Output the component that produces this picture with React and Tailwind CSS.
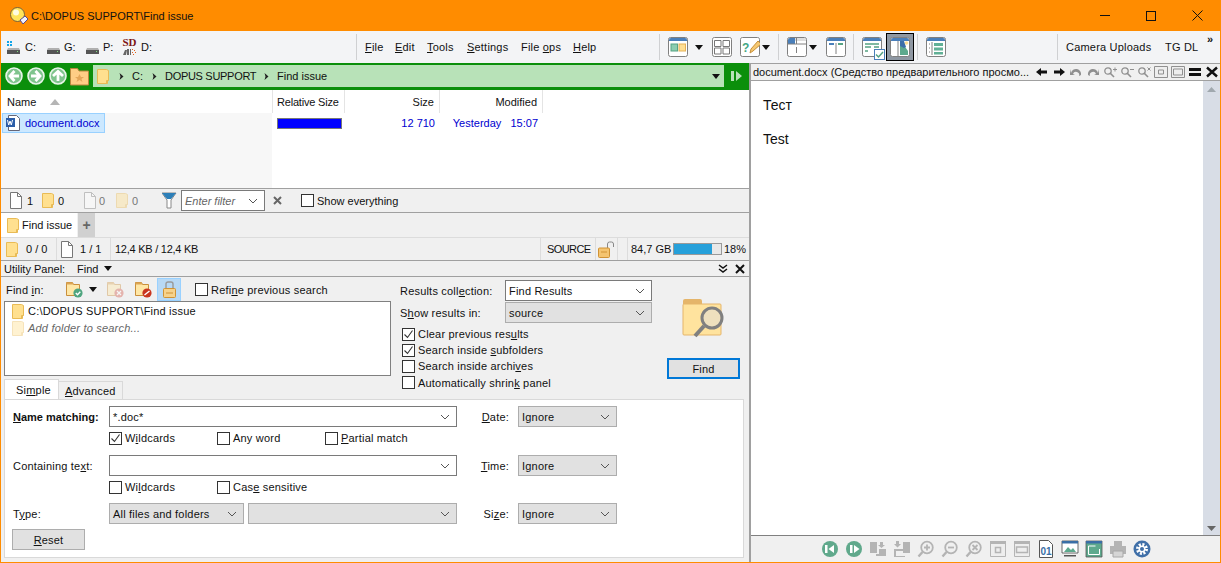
import React from "react";

const FONT = "font-['Liberation_Sans',Arial,sans-serif]";

function Folder({ size = 14, faded = false }) {
  return (
    <svg width={size} height={size * 1.25} viewBox="0 0 12 15" className={`shrink-0 ${faded ? "opacity-40" : ""}`}>
      <path d="M.5.5h9l2 1v10h-1v3H.5z" fill="#ffe08f" stroke="#e9bb55" />
      <path d="M9.5 14.5v-3h2" fill="none" stroke="#e9bb55" />
    </svg>
  );
}

function Page({ faded = false }) {
  return (
    <svg width="14" height="17" viewBox="0 0 14 17" className={`shrink-0 ${faded ? "opacity-40" : ""}`}>
      <path d="M1.5.5h7l4 4v12h-11z" fill="#fff" stroke="#777" />
      <path d="M8.5.5v4h4" fill="none" stroke="#777" />
    </svg>
  );
}

function Drive({ win }) {
  return (
    <svg width="15" height="15" viewBox="0 0 15 15" className="shrink-0">
      {win && <path d="M1 1h2v2H1zM4 1h2v2H4zM1 4h2v2H1zM4 4h2v2H4z" fill="#12a5e8" />}
      <path d="M2 8h11l1 2H1z" fill="#b0b0b0" />
      <rect x="1" y="10" width="13" height="4" fill="#555" />
      <rect x="11" y="11" width="1" height="1" fill="#7fe07f" />
    </svg>
  );
}

function Arrow({ className = "" }) {
  return (
    <svg width="8" height="5" viewBox="0 0 8 5" className={`shrink-0 ${className}`}>
      <path d="M0 0h8L4 5z" fill="#111" />
    </svg>
  );
}

function Chevron({ className = "" }) {
  return (
    <svg width="10" height="6" viewBox="0 0 10 6" className={`shrink-0 ${className}`}>
      <path d="M1 1l4 4 4-4" fill="none" stroke="#555" />
    </svg>
  );
}

function Frame({ children, top = "#4a7fba" }) {
  return (
    <svg width="20" height="20" viewBox="0 0 20 20" className="shrink-0">
      <rect x=".5" y=".5" width="19" height="19" rx="2" fill="#fff" stroke="#808080" />
      <path d="M1 3a2 2 0 0 1 2-2h14a2 2 0 0 1 2 2v1H1z" fill={top} />
      {children}
    </svg>
  );
}

function Divider({ className = "" }) {
  return <div className={`w-px h-[26px] bg-[#cfd0d2] shrink-0 ${className}`} />;
}

function NavCircle({ dir }) {
  const d = {
    left: "M9.500 4L5 9l4.500 5M5.500 9H14",
    right: "M8.500 4L13 9l-4.500 5M12.500 9H4",
    up: "M4 9l5-4.500L14 9M9 5v9",
  }[dir];
  return (
    <svg width="18" height="18" viewBox="0 0 18 18" className="shrink-0">
      <circle cx="9" cy="9" r="8" fill="#7fc48d" stroke="#e8f5e9" strokeWidth="1.6" />
      <path d={d} fill="none" stroke="#fff" strokeWidth="2.800" />
    </svg>
  );
}

function PathSep() {
  return (
    <svg width="5" height="7" viewBox="0 0 5 7" className="shrink-0">
      <path d="M.5 0l4 3.5-4 3.5 1-3.5z" fill="#222" />
    </svg>
  );
}

function Check({ checked, label, className = "" }) {
  return (
    <div className={`flex items-center gap-[3px] ${className}`}>
      <div className="w-[13px] h-[13px] border border-[#333] bg-white shrink-0 flex items-center justify-center">
        {checked && (
          <svg width="11" height="11" viewBox="0 0 11 11">
            <path d="M1.5 5.5l3 3 5-7" fill="none" stroke="#333" strokeWidth="1.1" />
          </svg>
        )}
      </div>
      <span className="whitespace-nowrap">{label}</span>
    </div>
  );
}

function Combo({ value, width, gray, italic, height = "h-[21px]", children }) {
  const look = gray ? "bg-[#e1e1e1] border-[#adadad]" : "bg-white border-[#7a7a7a]";
  return (
    <div className={`${height} border ${look} flex items-center shrink-0 pl-[3px] pr-[6px]`} style={{ width }}>
      <span className={`flex-1 whitespace-nowrap ${italic ? "italic text-[#666]" : ""}`}>{value}{children}</span>
      <Chevron />
    </div>
  );
}

function FolderAction({ badge, faded }) {
  return (
    <svg width="17" height="17" viewBox="0 0 17 17" className={`shrink-0 ${faded ? "opacity-40" : ""}`}>
      <path d="M.5 1.5h6l1 2h6v11H.5z" fill="#ffe7a6" stroke="#c98f3c" />
      <path d="M.5 1.5h6l1 2H.5z" fill="#dca554" />
      <circle cx="12" cy="12" r="4.6" fill={badge} />
      {badge === "#4fa57f" && <path d="M9.8 12l1.7 1.7 2.8-3" fill="none" stroke="#fff" strokeWidth="1.4" />}
      {badge === "#d45a4a" && <path d="M10 10l4 4m0-4l-4 4" fill="none" stroke="#fff" strokeWidth="1.3" />}
      {badge === "#c9351f" && <path d="M9.5 14l5-4" fill="none" stroke="#fff" strokeWidth="1.5" />}
    </svg>
  );
}

function Lock({ open }) {
  return (
    <svg width={open ? 16 : 13} height="17" viewBox={open ? "0 0 16 17" : "0 0 13 17"} className="shrink-0">
      {open ? (
        <>
          <path d="M9.5 7V3a2 2 0 0 1 2-2h2a2 2 0 0 1 2 2v3" fill="none" stroke="#888" />
          <rect x=".5" y="7" width="11" height="9.5" rx="1" fill="#f5c46f" stroke="#d09234" />
          <path d="M3 11h6" stroke="#d09234" />
        </>
      ) : (
        <>
          <path d="M3 8V3a2 2 0 0 1 2-2h3a2 2 0 0 1 2 2v5" fill="none" stroke="#999" strokeWidth="1.4" />
          <rect x=".5" y="7.5" width="12" height="9" rx="1" fill="#f7d28a" stroke="#d09234" />
          <path d="M3 12h7" stroke="#d09234" />
        </>
      )}
    </svg>
  );
}

function HeadGlyph({ children }) {
  return (
    <div className="w-[17px] flex justify-center items-center shrink-0">
      <svg width="14" height="12" viewBox="0 0 14 12">{children}</svg>
    </div>
  );
}

function Lens({ mark }) {
  return (
    <>
      <circle cx="5" cy="5" r="3.2" fill="none" stroke="#909090" strokeWidth="1.3" />
      <path d="M7.5 7.5l3.5 3.5" stroke="#909090" strokeWidth="1.6" />
      <path d={mark} stroke="#909090" fill="none" />
    </>
  );
}

function FootIcon({ children }) {
  return (
    <div className="w-[24px] flex justify-center items-center shrink-0">
      <svg width="18" height="18" viewBox="0 0 18 18">{children}</svg>
    </div>
  );
}

function FootLens({ mark }) {
  return (
    <>
      <circle cx="10" cy="7.5" r="5.8" fill="none" stroke="#b4b4b4" strokeWidth="1.8" />
      <path d="M5.5 12l-4 4.5" stroke="#b4b4b4" strokeWidth="2.4" />
      <path d={mark} stroke="#b4b4b4" strokeWidth="1.8" fill="none" />
    </>
  );
}

function TopBar() {
  return (
    <div className="h-[31px] bg-[#ff8c00] flex items-center shrink-0">
      <svg width="20" height="20" viewBox="0 0 20 20" className="ml-[8px] shrink-0">
        <circle cx="8.5" cy="8.5" r="7" fill="#ffe45c" stroke="#77613a" />
        <circle cx="7" cy="6.5" r="3" fill="#fffbe0" />
        <path d="M11 14l5-4 3 3-5 5z" fill="#f2f2ff" stroke="#5a4a8a" />
      </svg>
      <span className="ml-[2px] whitespace-nowrap">C:\DOPUS SUPPORT\Find issue</span>
      <div className="ml-auto flex items-center">
        <div className="w-[46px] h-[30px] flex items-center justify-center">
          <div className="w-[10px] h-px bg-[#111]" />
        </div>
        <div className="w-[46px] h-[30px] flex items-center justify-center">
          <div className="w-[10px] h-[10px] border border-[#111]" />
        </div>
        <div className="w-[46px] h-[30px] flex items-center justify-center">
          <svg width="11" height="11" viewBox="0 0 11 11"><path d="M.5.5l10 10m0-10l-10 10" stroke="#111" /></svg>
        </div>
      </div>
    </div>
  );
}

function ToolBar() {
  return (
    <div className="h-[32px] bg-[#f3f4f6] flex items-center shrink-0 relative">
      <div className="flex items-center w-[355px] pl-[5px]">
        <Drive win /><span className="ml-[4px] w-[21px]">C:</span>
        <Drive /><span className="ml-[3px] w-[21px]">G:</span>
        <Drive /><span className="ml-[3px] w-[19px]">P:</span>
        <div className="w-[15px] h-[20px] flex flex-col items-center shrink-0">
          <span className="text-[11px] leading-[10px] font-bold text-[#7d1414] font-['Liberation_Serif',serif]">SD</span>
          <svg width="15" height="9" viewBox="0 0 15 9">
            <path d="M1 8l2-5h2l-1 5zM5 2h2v6H5zM8 2h1v6H8z" fill="#666" />
            <path d="M10 2h1v1h-1zM12 3h1v1h-1zM10 5h1v1h-1zM13 5h1v1h-1zM11 7h1v1h-1z" fill="#e2611c" />
          </svg>
        </div>
        <span className="ml-[4px]">D:</span>
      </div>
      <Divider />
      <div className="flex items-center w-[302px] pl-[8px] tracking-[0.2px]">
        <span className="w-[30px]"><u>F</u>ile</span>
        <span className="w-[32px]"><u>E</u>dit</span>
        <span className="w-[40px]"><u>T</u>ools</span>
        <span className="w-[54px]"><u>S</u>ettings</span>
        <span className="w-[52px]">File <u>o</u>ps</span>
        <span><u>H</u>elp</span>
      </div>
      <Divider />
      <div className="flex items-center pl-[8px]">
        <Frame>
          <rect x="3" y="7" width="6.5" height="7" fill="#8ccdb0" stroke="#55a283" />
          <rect x="11" y="7" width="6.5" height="7" fill="#ffdf94" stroke="#e5b256" />
        </Frame>
        <Arrow className="ml-[7px]" />
        <div className="ml-[9px]">
          <Frame top="#fff">
            <path d="M2.5 3.5h6.5v6H2.5zM11 3.5h6.5v6H11zM2.5 11h6.5v6H2.5zM11 11h6.5v6H11z" fill="none" stroke="#777" />
          </Frame>
        </div>
        <div className="ml-[8px]">
          <Frame top="#fff">
            <text x="2" y="15" fontSize="12" fontWeight="700" fill="#45a683" fontFamily="Liberation Sans">?</text>
            <path d="M10 16l1-4 7-8 3 3-8 7z" fill="#f5c872" stroke="#c99038" />
          </Frame>
        </div>
        <Arrow className="ml-[2px]" />
      </div>
      <Divider className="ml-[8px]" />
      <div className="flex items-center pl-[8px]">
        <Frame top="#dedede">
          <path d="M1 3a2 2 0 0 1 2-2h5v6H1z" fill="#4a7fba" />
          <path d="M1 7h18M9.500 1v6M9.500 10v6" stroke="#808080" fill="none" />
        </Frame>
        <Arrow className="ml-[2px]" />
        <div className="ml-[9px]">
          <Frame>
            <path d="M10 6v11" stroke="#808080" />
            <rect x="3" y="6" width="5" height="2" fill="#4a7fba" />
            <rect x="12" y="6" width="5" height="2" fill="#55a283" />
          </Frame>
        </div>
      </div>
      <Divider className="ml-[7px]" />
      <div className="flex items-center pl-[8px]">
        <div className="relative w-[20px] h-[20px]">
          <Frame>
            <path d="M3 7h14M3 10h6M12 10h5M3 14h3" stroke="#55a283" strokeWidth="1.4" />
          </Frame>
          <div className="absolute right-[-3px] bottom-[-3px] w-[11px] h-[11px] bg-white border border-[#4a7fba] flex items-center justify-center">
            <svg width="9" height="9" viewBox="0 0 9 9"><path d="M1 4.500l2.500 2.500L8 2" fill="none" stroke="#55a283" strokeWidth="1.5" /></svg>
          </div>
        </div>
        <div className="ml-[4px] w-[28px] h-[28px] bg-[#8e97a2] border border-black flex items-center justify-center">
          <Frame>
            <path d="M8 4v15" stroke="#808080" />
            <path d="M10 4h8v14h-8z" fill="#fff" />
            <path d="M10 9l3-2 5 7v4h-8z" fill="#5da98d" />
            <path d="M10 4h4l2 6-2 1-4-2z" fill="#3e6fa8" />
            <circle cx="16.500" cy="6" r="1.800" fill="#ffdf94" />
          </Frame>
        </div>
      </div>
      <Divider className="ml-[3px]" />
      <div className="flex items-center pl-[8px] w-[139px]">
        <Frame>
          <path d="M6 5v13" stroke="#808080" />
          <path d="M3 7h1M3 11h1M3 15h1" stroke="#808080" />
          <path d="M8 6h9v3H8zM8 10.500h9v3H8zM8 15h9v2.500H8z" fill="#61b096" />
        </Frame>
      </div>
      <Divider />
      <div className="flex items-center pl-[8px] flex-1 tracking-[0.2px]">
        <span className="w-[99px] whitespace-nowrap">Camera Uploads</span>
        <span>TG DL</span>
      </div>
      <span className="absolute right-[7px] top-[2px] text-[11px] font-bold leading-[12px]">»</span>
    </div>
  );
}

function PathBar() {
  return (
    <div className="h-[26px] bg-[#0b8f0b] flex items-center shrink-0 pl-[4px]">
      <NavCircle dir="left" />
      <div className="ml-[4px]"><NavCircle dir="right" /></div>
      <div className="ml-[4px]"><NavCircle dir="up" /></div>
      <svg width="19" height="19" viewBox="0 0 19 19" className="ml-[3px] shrink-0">
        <path d="M.5 1.500h7l1.500 2.500h9.500v14H.5z" fill="#ffcd85" stroke="#b9873f" />
        <path d="M9.500 7l1.500 3h3l-2.500 2 1 3-3-2-3 2 1-3L5 10h3z" fill="#e5a75a" />
      </svg>
      <div className="ml-[4px] flex-1 h-[22px] bg-[#b8e2b8] flex items-center pl-[4px]">
        <Folder size={12} />
        <div className="ml-[10px]"><PathSep /></div>
        <span className="ml-[8px] w-[20px]">C:</span>
        <PathSep />
        <span className="ml-[8px] w-[91px] whitespace-nowrap tracking-[-0.3px]">DOPUS SUPPORT</span>
        <div className="ml-[8px]"><PathSep /></div>
        <span className="ml-[8px] whitespace-nowrap">Find issue</span>
        <Arrow className="ml-auto mr-[4px]" />
      </div>
      <div className="w-[25px] flex items-center justify-center shrink-0">
        <svg width="11" height="10" viewBox="0 0 11 10"><path d="M0 0h3v10H0zM5 0l6 5-6 5z" fill="#b8e2b8" /></svg>
      </div>
    </div>
  );
}

function Lister() {
  return (
    <div className="h-[99px] bg-white flex shrink-0 border-t border-[#0b8f0b]">
      <div className="w-[271px] shrink-0 flex flex-col">
        <div className="h-[23px] flex items-center pl-[6px] bg-white">
          <span>Name</span>
          <svg width="10" height="6" viewBox="0 0 10 6" className="ml-[14px]"><path d="M5 0l5 6H0z" fill="#b5b5b5" /></svg>
        </div>
        <div className="flex-1 bg-[#f7f7f7] pl-px">
          <div className="w-[103px] h-[20px] bg-[#cce8ff] border border-[#99d1ff] flex items-center pl-[2px] text-[#0000d0]">
            <svg width="16" height="16" viewBox="0 0 16 16" className="shrink-0">
              <path d="M3.500.5h8l3 3v12h-11z" fill="#fff" stroke="#667" />
              <rect x="1" y="3" width="9" height="9" fill="#2b5da8" />
              <path d="M2.500 5l1.200 5 1.300-4 1.300 4L7.500 5" fill="none" stroke="#fff" />
            </svg>
            <span className="ml-[4px] whitespace-nowrap">document.docx</span>
          </div>
        </div>
      </div>
      <div className="flex-1 flex flex-col">
        <div className="h-[23px] flex items-center">
          <div className="w-[73px] h-full border-l border-r border-[#e4e4e4] pl-[4px] flex items-center whitespace-nowrap tracking-[-0.2px]">Relative Size</div>
          <div className="w-[95px] h-full border-r border-[#e4e4e4] pr-[5px] flex items-center justify-end">Size</div>
          <div className="w-[103px] h-full border-r border-[#e4e4e4] pr-[5px] flex items-center justify-end">Modified</div>
        </div>
        <div className="h-[20px] flex items-center text-[#0000d0]">
          <div className="w-[73px] pl-[5px]">
            <div className="w-[65px] h-[11px] bg-[#0000ff] border border-[#777]" />
          </div>
          <div className="w-[95px] text-right pr-[5px]">12 710</div>
          <div className="w-[103px] text-right pr-[5px] whitespace-nowrap">Yesterday&nbsp;&nbsp;&nbsp;15:07</div>
        </div>
      </div>
    </div>
  );
}

function FilterBar() {
  return (
    <div className="h-[24px] border-t border-[#a0a0a0] flex items-center shrink-0 pl-[8px]">
      <Page />
      <span className="ml-[4px] w-[15px]">1</span>
      <Folder size={12} />
      <span className="ml-[4px] w-[25px]">0</span>
      <Page faded />
      <span className="ml-[2px] w-[17px] text-[#777]">0</span>
      <Folder size={12} faded />
      <span className="ml-[4px] w-[30px] text-[#777]">0</span>
      <svg width="15" height="17" viewBox="0 0 15 17" className="shrink-0">
        <path d="M0 1h14L9 8v8H5V8z" fill="#fff" stroke="#888" />
        <path d="M0 1h14L9 7H5z" fill="#2d7fb8" />
      </svg>
      <div className="ml-[4px]"><Combo value="Enter filter" width="84px" italic /></div>
      <svg width="9" height="9" viewBox="0 0 9 9" className="ml-[8px] shrink-0"><path d="M1 1l7 7m0-7L1 8" stroke="#666" strokeWidth="2" /></svg>
      <Check label="Show everything" className="ml-[19px]" />
    </div>
  );
}

function TabStrip() {
  return (
    <div className="h-[25px] border-t border-[#a0a0a0] flex shrink-0">
      <div className="w-[76px] bg-white flex items-center pl-[6px]">
        <Folder size={12} />
        <span className="ml-[3px] whitespace-nowrap">Find issue</span>
      </div>
      <div className="w-[17px] ml-px bg-[#d0d0d0] flex items-center justify-center font-bold text-[#666] text-[14px]">+</div>
    </div>
  );
}

function StatusBar() {
  return (
    <div className="h-[23px] border-t border-[#dcdcdc] flex items-center shrink-0 pl-[5px]">
      <Folder size={12} />
      <span className="ml-[8px] w-[30px] whitespace-nowrap">0 / 0</span>
      <div className="w-px h-full bg-[#dcdcdc]" />
      <div className="ml-[3px]"><Page /></div>
      <span className="ml-[6px] w-[30px] whitespace-nowrap">1 / 1</span>
      <div className="w-px h-full bg-[#dcdcdc]" />
      <span className="ml-[4px] w-[425px] whitespace-nowrap tracking-[-0.25px]">12,4 KB / 12,4 KB</span>
      <div className="w-px h-full bg-[#dcdcdc]" />
      <span className="ml-[6px] w-[48px] tracking-[-0.6px]">SOURCE</span>
      <div className="w-px h-full bg-[#dcdcdc]" />
      <div className="ml-[2px] w-[19px] flex"><Lock open /></div>
      <div className="w-px h-full bg-[#dcdcdc]" />
      <div className="ml-[9px] w-px h-full bg-[#dcdcdc]" />
      <span className="ml-[3px] whitespace-nowrap w-[42px]">84,7 GB</span>
      <div className="w-[49px] h-[12px] border border-[#999] bg-[#e8e8e8] shrink-0">
        <div className="h-full bg-[#26a0da]" style={{ width: "80%" }} />
      </div>
      <span className="ml-[2px]">18%</span>
    </div>
  );
}

function FindPanel() {
  return (
    <div className="flex-1 min-h-0 flex flex-col pl-[3px] pr-[5px] border-t border-[#a0a0a0] tracking-[0.2px]">
      <div className="flex h-[102px] shrink-0">
        <div className="w-[387px] shrink-0 flex flex-col">
          <div className="h-[24px] flex items-center pl-[2px] pt-px shrink-0">
            <span className="w-[60px]">Find <u>i</u>n:</span>
            <FolderAction badge="#4fa57f" />
            <Arrow className="ml-[6px]" />
            <div className="ml-[10px]"><FolderAction badge="#d45a4a" faded /></div>
            <div className="ml-[11px]"><FolderAction badge="#c9351f" /></div>
            <div className="ml-[5px] w-[24px] h-[23px] bg-[#b8d9f5] border border-[#99d1ff] flex items-center justify-center"><Lock /></div>
            <Check label={<>Refi<u>n</u>e previous search</>} className="ml-[14px]" />
          </div>
          <div className="h-[75px] bg-white border border-[#808080] pl-[7px] pt-[1px] flex flex-col gap-px shrink-0">
            <div className="flex items-center gap-[4px] h-[16px]">
              <Folder size={12} />
              <span className="whitespace-nowrap">C:\DOPUS SUPPORT\Find issue</span>
            </div>
            <div className="flex items-center gap-[4px] h-[16px]">
              <Folder size={12} faded />
              <span className="italic text-[#666] whitespace-nowrap">Add folder to search...</span>
            </div>
          </div>
        </div>
        <div className="w-[252px] ml-[9px] pt-[3px] flex flex-col shrink-0">
          <div className="flex items-center justify-between h-[22px]">
            <span className="whitespace-nowrap">Results coll<u>e</u>ction:</span>
            <Combo value="Find Results" width="147px" />
          </div>
          <div className="flex items-center justify-between h-[22px] mt-[1px]">
            <span className="whitespace-nowrap">S<u>h</u>ow results in:</span>
            <Combo value="source" width="147px" gray />
          </div>
          <div className="mt-[3px] pl-[2px] flex flex-col">
            <Check checked label={<>Clear previous res<u>u</u>lts</>} className="h-[16px]" />
            <Check checked label={<>Search inside <u>s</u>ubfolders</>} className="h-[16px]" />
            <Check label={<>Search inside archi<u>v</u>es</>} className="h-[16px]" />
            <Check label={<>Automatically shrin<u>k</u> panel</>} className="h-[17px]" />
          </div>
        </div>
        <div className="flex-1 flex flex-col items-center pt-[21px] pl-[11px]">
          <svg width="44" height="44" viewBox="0 0 44 44" className="shrink-0">
            <path d="M1 3a2 2 0 0 1 2-2h15a2 2 0 0 1 2 2v3H1z" fill="#e5b56a" />
            <rect x="1" y="6" width="38" height="31" rx="1" fill="#ffe39e" stroke="#e5b56a" />
            <circle cx="30" cy="20" r="10" fill="#ddd" fillOpacity=".5" stroke="#808080" strokeWidth="3" />
            <path d="M22 28L13 38" stroke="#808080" strokeWidth="4" />
          </svg>
          <div className="mt-[16px] w-[73px] h-[21px] bg-[#e1e1e1] border-2 border-[#0078d7] flex items-center justify-center shrink-0">Find</div>
        </div>
      </div>
      <div className="flex h-[21px] shrink-0 items-end">
        <div className="w-[55px] h-[21px] bg-white border border-b-0 border-[#d9d9d9] pl-[11px] flex items-center">Si<u>m</u>ple</div>
        <div className="w-[64px] h-[19px] bg-[#f0f0f0] border border-b-0 border-l-0 border-[#d9d9d9] pl-[6px] flex items-center"><u>A</u>dvanced</div>
      </div>
      <div className="h-[159px] w-[740px] bg-white border border-[#d9d9d9] pt-[6px] pl-[8px] flex flex-col shrink-0 -mt-px">
        <div className="flex items-center h-[21px]">
          <span className="w-[96px] font-bold whitespace-nowrap tracking-normal"><u>N</u>ame matching:</span>
          <Combo value="*.doc*" width="348px" />
          <span className="w-[52px] text-right whitespace-nowrap"><u>D</u>ate:</span>
          <div className="ml-[9px]"><Combo value="Ignore" width="99px" gray /></div>
        </div>
        <div className="flex items-center h-[16px] mt-[3px] pl-[96px]">
          <Check checked label={<>W<u>i</u>ldcards</>} className="w-[108px]" />
          <Check label="Any word" className="w-[108px]" />
          <Check label={<><u>P</u>artial match</>} />
        </div>
        <div className="flex items-center h-[21px] mt-[9px]">
          <span className="w-[96px] whitespace-nowrap">Containing te<u>x</u>t:</span>
          <Combo value="" width="348px" />
          <span className="w-[52px] text-right whitespace-nowrap"><u>T</u>ime:</span>
          <div className="ml-[9px]"><Combo value="Ignore" width="99px" gray /></div>
        </div>
        <div className="flex items-center h-[16px] mt-[3px] pl-[96px]">
          <Check label={<>Wi<u>l</u>dcards</>} className="w-[108px]" />
          <Check label={<>Cas<u>e</u> sensitive</>} />
        </div>
        <div className="flex items-center h-[21px] mt-[8px]">
          <span className="w-[96px]">T<u>y</u>pe:</span>
          <Combo value="All files and folders" width="135px" gray />
          <div className="ml-[4px]"><Combo value="" width="209px" gray /></div>
          <span className="w-[52px] text-right whitespace-nowrap">Si<u>z</u>e:</span>
          <div className="ml-[9px]"><Combo value="Ignore" width="99px" gray /></div>
        </div>
        <div className="mt-[5px] w-[73px] h-[21px] bg-[#e1e1e1] border border-[#adadad] flex items-center justify-center -ml-px"><u>R</u>eset</div>
      </div>
    </div>
  );
}

function Preview() {
  return (
    <div className="flex-1 min-w-0 flex flex-col border-l-2 border-[#a0a0a0]">
      <div className="h-[17px] border-t border-[#a0a0a0] flex items-center shrink-0 pl-[2px]">
        <span className="w-[280px] whitespace-nowrap">document.docx (Средство предварительного просмо...</span>
        <HeadGlyph><path d="M1 6l5-4v2.500h6v3H6V10z" fill="#111" /></HeadGlyph>
        <HeadGlyph><path d="M13 6L8 2v2.500H2v3h6V10z" fill="#111" /></HeadGlyph>
        <HeadGlyph><path d="M2 7a5 5 0 0 1 10 2l-2 1a3 3 0 0 0-6-2l2 1H1V3z" fill="#909090" /></HeadGlyph>
        <HeadGlyph><path d="M12 7A5 5 0 0 0 2 9l2 1a3 3 0 0 1 6-2L8 9h5V3z" fill="#909090" /></HeadGlyph>
        <HeadGlyph><Lens mark="M10 3.500h4M12 1.500v4" /></HeadGlyph>
        <HeadGlyph><Lens mark="M10 3.500h4" /></HeadGlyph>
        <HeadGlyph><Lens mark="M10.500 1.500l3 3m0-3l-3 3" /></HeadGlyph>
        <HeadGlyph><path d="M.5.5h13v11H.5z" fill="#eee" stroke="#909090" /><path d="M4.500 4h5v4h-5z" fill="none" stroke="#909090" /></HeadGlyph>
        <HeadGlyph><path d="M.5.5h13v11H.5z" fill="#eee" stroke="#909090" /><path d="M2.500 3h9v6h-9z" fill="none" stroke="#909090" /></HeadGlyph>
        <HeadGlyph><path d="M1 2h12v3H1zM1 7h12v3H1z" fill="#111" /></HeadGlyph>
        <HeadGlyph><path d="M2 1.500l10 9m0-9l-10 9" stroke="#111" strokeWidth="2.400" /></HeadGlyph>
      </div>
      <div className="flex-1 min-h-0 flex border-t border-[#a0a0a0] pl-[1px] bg-white">
        <div className="flex-1 pl-[11px] pt-[16px] text-[14px] leading-[16px] flex flex-col gap-[18px]">
          <span>Тест</span>
          <span>Test</span>
        </div>
        <div className="w-[17px] bg-[#d8dde6] flex flex-col justify-between items-center pt-[6px] pb-[4px] shrink-0">
          <svg width="9" height="5" viewBox="0 0 9 5"><path d="M4.500 0L9 5H0z" fill="#a0a8ae" /></svg>
          <svg width="9" height="5" viewBox="0 0 9 5"><path d="M4.500 5L9 0H0z" fill="#666" /></svg>
        </div>
      </div>
      <div className="h-[27px] border-t border-[#808080] flex items-center justify-center shrink-0">
        <FootIcon><circle cx="9" cy="9" r="8" fill="#60a98c" /><path d="M4 5h2.500v8H4zM13 5v8L7.500 9z" fill="#fff" /></FootIcon>
        <FootIcon><circle cx="9" cy="9" r="8" fill="#60a98c" /><path d="M5 5v8h2.500V5zM9 5v8l5.500-4z" fill="#fff" /></FootIcon>
        <FootIcon><path d="M1 2h7v11H1z" fill="#b4b4b4" /><path d="M10 9h7v7H7v-2h3zM11 2h3v3h2l-3.500 3L9 5h2z" fill="#b4b4b4" /></FootIcon>
        <FootIcon><path d="M10 2h7v11h-7z" fill="#b4b4b4" /><path d="M1 9h10v2H3v5h9v1H1zM3 1h3v3h2L4.500 7.500 1 4h2z" fill="#b4b4b4" /></FootIcon>
        <FootIcon><FootLens mark="M7 7.500h6M10 4.500v6" /></FootIcon>
        <FootIcon><FootLens mark="M7 7.500h6" /></FootIcon>
        <FootIcon><FootLens mark="M7.500 5l5 5m0-5l-5 5" /></FootIcon>
        <FootIcon><path d="M1.500 1.500h15v15h-15z" fill="#eee" stroke="#b4b4b4" /><path d="M1 1h16v3H1z" fill="#b4b4b4" /><path d="M6.500 7.500h5v5h-5z" fill="none" stroke="#b4b4b4" strokeWidth="1.500" /></FootIcon>
        <FootIcon><path d="M1.500 1.500h15v15h-15z" fill="#eee" stroke="#b4b4b4" /><path d="M1 1h16v3H1z" fill="#b4b4b4" /><path d="M3.500 7h11v5.500h-11z" fill="none" stroke="#b4b4b4" strokeWidth="1.500" /></FootIcon>
        <FootIcon><path d="M2.500.5h9l4 4v13h-13z" fill="#fff" stroke="#555" /><text x="3.500" y="15" fontSize="10" fontWeight="700" fill="#3a6ea5" fontFamily="Liberation Sans">01</text></FootIcon>
        <FootIcon><path d="M1 1h16v12H1z" fill="#fff" stroke="#444" strokeWidth=".8" /><path d="M1 1h16v2.500H1z" fill="#3a6ea5" /><path d="M3 12l4-5 3 3 2-2 3 4z" fill="#5da98d" /><path d="M3 15h12v1.500H3z" fill="#555" /></FootIcon>
        <FootIcon><path d="M1 1h16v16H1z" fill="#5da98d" stroke="#555" strokeWidth=".8" /><path d="M1 1h16v2.500H1z" fill="#3a6ea5" /><path d="M3.500 6h7M3.500 6v8.500h11V9" fill="none" stroke="#fff" /></FootIcon>
        <FootIcon><path d="M5 1h8v5H5zM1 6h16v8H1z" fill="#b4b4b4" /><path d="M4 11h10v6H4z" fill="#d5d5d5" stroke="#a8a8a8" /></FootIcon>
        <FootIcon><circle cx="9" cy="9" r="8.500" fill="#3f6fa8" /><circle cx="9" cy="9" r="4.500" fill="none" stroke="#fff" strokeWidth="3" strokeDasharray="2 1.500" /><circle cx="9" cy="9" r="3.500" fill="#fff" /><circle cx="9" cy="9" r="2" fill="#3f6fa8" /></FootIcon>
      </div>
    </div>
  );
}

export default function App() {
  return (
    <div className={`w-[1221px] h-[563px] overflow-hidden flex flex-col border border-t-0 border-[#ff8c00] bg-[#f0f0f0] text-[11px] leading-[14px] text-[#111] ${FONT}`}>
      <TopBar />
      <ToolBar />
      <div className="flex-1 min-h-0 flex">
        <div className="w-[748px] shrink-0 flex flex-col">
          <PathBar />
          <Lister />
          <FilterBar />
          <TabStrip />
          <StatusBar />
          <div className="h-[16px] border-t border-[#a0a0a0] flex items-center shrink-0 pl-[3px]">
            <span className="w-[73px]">Utility Panel:</span>
            <span>Find</span>
            <Arrow className="ml-[6px]" />
            <span className="ml-auto flex items-center gap-[7px] pr-[4px]">
              <svg width="10" height="9" viewBox="0 0 10 9"><path d="M1 1l4 3 4-3M1 5l4 3 4-3" fill="none" stroke="#111" strokeWidth="1.500" /></svg>
              <svg width="10" height="10" viewBox="0 0 10 10"><path d="M1 1l8 8m0-8L1 9" stroke="#111" strokeWidth="2" /></svg>
            </span>
          </div>
          <FindPanel />
        </div>
        <Preview />
      </div>
    </div>
  );
}
